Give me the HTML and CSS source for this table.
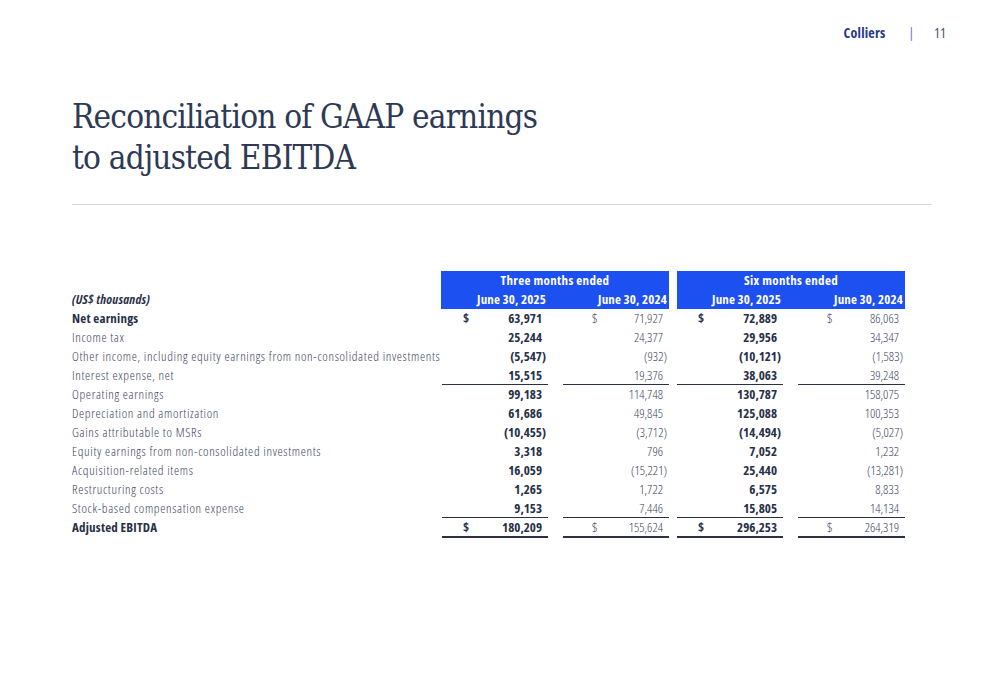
FILE: index.html
```html
<!DOCTYPE html>
<html lang="en">
<head>
<meta charset="utf-8">
<title>Reconciliation of GAAP earnings to adjusted EBITDA</title>
<link rel="stylesheet" href="styles.css">
</head>
<body>
<div class="page">
  <header class="topbar">
    <span class="brand">Colliers</span>
    <span class="sep">|</span>
    <span class="pnum">11</span>
  </header>

  <h1 class="title">Reconciliation of GAAP earnings<br>to adjusted EBITDA</h1>
  <div class="rule"></div>

  <div class="table">
    <div class="row hrow1">
      <div class="lbl"></div>
      <div class="band b1">Three months ended</div>
      <div class="band b2">Six months ended</div>
    </div>
    <div class="row hrow2">
      <div class="lbl units">(US$ thousands)</div>
      <div class="hd c1">June 30, 2025</div>
      <div class="hd c2">June 30, 2024</div>
      <div class="hd c3">June 30, 2025</div>
      <div class="hd c4">June 30, 2024</div>
    </div>

    <div class="row strong">
      <div class="lbl">Net earnings</div>
      <div class="v c1 b"><span class="cur">$</span>63,971</div>
      <div class="v c2"><span class="cur">$</span>71,927</div>
      <div class="v c3 b"><span class="cur">$</span>72,889</div>
      <div class="v c4"><span class="cur">$</span>86,063</div>
    </div>
    <div class="row">
      <div class="lbl">Income tax</div>
      <div class="v c1 b">25,244</div>
      <div class="v c2">24,377</div>
      <div class="v c3 b">29,956</div>
      <div class="v c4">34,347</div>
    </div>
    <div class="row">
      <div class="lbl">Other income, including equity earnings from non-consolidated investments</div>
      <div class="v c1 b neg">(5,547)</div>
      <div class="v c2 neg">(932)</div>
      <div class="v c3 b neg">(10,121)</div>
      <div class="v c4 neg">(1,583)</div>
    </div>
    <div class="row line-below">
      <div class="lbl">Interest expense, net</div>
      <div class="v c1 b">15,515</div>
      <div class="v c2">19,376</div>
      <div class="v c3 b">38,063</div>
      <div class="v c4">39,248</div>
    </div>
    <div class="row">
      <div class="lbl">Operating earnings</div>
      <div class="v c1 b">99,183</div>
      <div class="v c2">114,748</div>
      <div class="v c3 b">130,787</div>
      <div class="v c4">158,075</div>
    </div>
    <div class="row">
      <div class="lbl">Depreciation and amortization</div>
      <div class="v c1 b">61,686</div>
      <div class="v c2">49,845</div>
      <div class="v c3 b">125,088</div>
      <div class="v c4">100,353</div>
    </div>
    <div class="row">
      <div class="lbl">Gains attributable to MSRs</div>
      <div class="v c1 b neg">(10,455)</div>
      <div class="v c2 neg">(3,712)</div>
      <div class="v c3 b neg">(14,494)</div>
      <div class="v c4 neg">(5,027)</div>
    </div>
    <div class="row">
      <div class="lbl">Equity earnings from non-consolidated investments</div>
      <div class="v c1 b">3,318</div>
      <div class="v c2">796</div>
      <div class="v c3 b">7,052</div>
      <div class="v c4">1,232</div>
    </div>
    <div class="row">
      <div class="lbl">Acquisition-related items</div>
      <div class="v c1 b">16,059</div>
      <div class="v c2 neg">(15,221)</div>
      <div class="v c3 b">25,440</div>
      <div class="v c4 neg">(13,281)</div>
    </div>
    <div class="row">
      <div class="lbl">Restructuring costs</div>
      <div class="v c1 b">1,265</div>
      <div class="v c2">1,722</div>
      <div class="v c3 b">6,575</div>
      <div class="v c4">8,833</div>
    </div>
    <div class="row">
      <div class="lbl">Stock-based compensation expense</div>
      <div class="v c1 b">9,153</div>
      <div class="v c2">7,446</div>
      <div class="v c3 b">15,805</div>
      <div class="v c4">14,134</div>
    </div>
    <div class="row strong total">
      <div class="lbl">Adjusted EBITDA</div>
      <div class="v c1 b"><span class="cur">$</span>180,209</div>
      <div class="v c2"><span class="cur">$</span>155,624</div>
      <div class="v c3 b"><span class="cur">$</span>296,253</div>
      <div class="v c4"><span class="cur">$</span>264,319</div>
    </div>
  </div>
</div>
</body>
</html>
```

FILE: styles.css
```css
html, body {
  margin: 0;
  padding: 0;
  background: #ffffff;
}

.page {
  width: 1000px;
  height: 685px;
  overflow: hidden;
  font-family: "Open Sans", "Liberation Sans", sans-serif;
  font-stretch: 75%;
  color: #3f4660;
}

.topbar {
  display: flex;
  justify-content: flex-end;
  align-items: center;
  padding: 24px 54px 0 0;
  height: 18px;
  font-size: 14px;
  line-height: 18px;
}

.brand {
  font-weight: 700;
  color: #283a86;
  letter-spacing: 0.2px;
}

.sep {
  color: #5b7cf2;
  margin: 0 20px 0 23px;
  font-weight: 400;
}

.pnum {
  color: #4b5374;
  font-weight: 400;
}

.title {
  margin: 54px 0 0 72px;
  font-family: "DejaVu Serif", serif;
  font-stretch: condensed;
  font-weight: 400;
  font-size: 33px;
  line-height: 41px;
  color: #2e3954;
  letter-spacing: -0.8px;
}

.rule {
  margin: 26px 68px 0 72px;
  height: 1px;
  background: #d5d8df;
}

.table {
  margin: 66px 0 0 72px;
  font-size: 13px;
}

.row {
  display: grid;
  grid-template-columns: 370px 106px 121px 114px 122px;
  height: 19px;
  line-height: 19px;
}

.lbl {
  font-weight: 300;
  color: #3b4260;
  white-space: nowrap;
  letter-spacing: 0.66px;
}

.strong .lbl {
  font-weight: 700;
  color: #283049;
  letter-spacing: 0.2px;
}

.units {
  font-weight: 700;
  font-style: italic;
  color: #283049;
  letter-spacing: 0.2px;
}

.band {
  grid-column: span 2;
  background: #1d50f0;
  color: #ffffff;
  font-weight: 700;
  letter-spacing: 0.35px;
  text-align: center;
}

.band.b1 {
  margin-left: -1px;
}

.band.b2 {
  margin-left: 8px;
}

.hd {
  background: #1d50f0;
  color: #ffffff;
  font-weight: 700;
  letter-spacing: 0.15px;
  text-align: right;
  padding-right: 2px;
}

.hd.c1 {
  margin-left: -1px;
}

.hd.c3 {
  margin-left: 8px;
}

.v {
  position: relative;
  text-align: right;
  padding-right: 6px;
  font-weight: 300;
  color: #3b4260;
}

.v.b {
  font-weight: 700;
  color: #283049;
}

.v.neg {
  padding-right: 2px;
}

.v.c2,
.v.c4 {
  margin-left: 15px;
}

.v.c3 {
  margin-left: 8px;
}

.cur {
  position: absolute;
  left: 21px;
  top: 0;
}

.v.c2 .cur,
.v.c4 .cur {
  left: 29px;
}

.line-below .v {
  border-bottom: 1px solid #2b3045;
  height: 18px;
}

.total .v {
  border-top: 1px solid #2b3045;
  border-bottom: 2px solid #2b3045;
  height: 18px;
  line-height: 18px;
  margin-top: -1px;
}
```
